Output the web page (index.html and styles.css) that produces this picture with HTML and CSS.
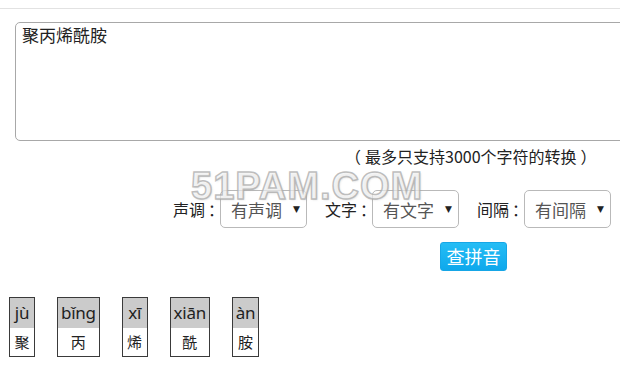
FILE: index.html
```html
<!DOCTYPE html>
<html lang="zh-CN">
<head>
<meta charset="utf-8">
<title>汉字转拼音</title>
<link rel="stylesheet" href="styles.css">
</head>
<body>
<div class="page">
  <div class="input-wrap">
    <textarea class="input">聚丙烯酰胺</textarea>
  </div>
  <div class="hint"><span class="po">（</span>最多只支持3000个字符的转换<span class="pc">）</span></div>
  <div class="options">
    <span class="label">声调<span class="colon">：</span></span>
    <span class="select"><span class="sel-text">有声调</span><span class="arrow">▼</span></span>
    <span class="label">文字<span class="colon">：</span></span>
    <span class="select"><span class="sel-text">有文字</span><span class="arrow">▼</span></span>
    <span class="label">间隔<span class="colon">：</span></span>
    <span class="select"><span class="sel-text">有间隔</span><span class="arrow">▼</span></span>
  </div>
  <div class="actions">
    <button class="btn">查拼音</button>
  </div>
  <div class="result">
    <div class="cell"><div class="py">jù</div><div class="hz">聚</div></div>
    <div class="cell"><div class="py">bǐng</div><div class="hz">丙</div></div>
    <div class="cell"><div class="py">xī</div><div class="hz">烯</div></div>
    <div class="cell"><div class="py">xiān</div><div class="hz">酰</div></div>
    <div class="cell"><div class="py">àn</div><div class="hz">胺</div></div>
  </div>
  <div class="watermark">51PAM.COM</div>
</div>
</body>
</html>
```

FILE: styles.css
```css
html, body {
  margin: 0;
  padding: 0;
  background: #fff;
  overflow: hidden;
}
body {
  font-family: "Noto Sans CJK SC", "Noto Sans", sans-serif;
  color: #333;
}
.page {
  position: relative;
  margin-top: 8px;
  border-top: 1px solid #e2e2e2;
  height: 375px;
  overflow: hidden;
}
.input-wrap {
  padding-left: 15px;
  padding-top: 13px;
  width: 660px;
}
.input {
  display: block;
  box-sizing: border-box;
  width: 640px;
  height: 119px;
  border: 1px solid #a8a8a8;
  border-radius: 5px;
  padding: 0 6px;
  margin: 0;
  font-family: "Noto Sans CJK SC", sans-serif;
  font-size: 17px;
  line-height: 24px;
  color: #222;
  resize: none;
  outline: none;
}
.hint {
  margin-top: 5px;
  padding-left: 345px;
  font-size: 16px;
  line-height: 20px;
  color: #222;
  white-space: nowrap;
}
.po {
  margin-right: 4px;
}
.pc {
  margin-left: 4px;
}
.options {
  display: flex;
  align-items: center;
  margin-top: 24px;
  padding-left: 173px;
  height: 38px;
}
.label {
  font-size: 16px;
  color: #222;
  width: 47px;
  margin-left: 18px;
  white-space: nowrap;
}
.label:first-child {
  margin-left: 0;
}
.colon {
  padding-left: 3px;
  letter-spacing: -9px;
}
.select {
  box-sizing: border-box;
  display: flex;
  align-items: center;
  justify-content: space-between;
  width: 87px;
  height: 38px;
  border: 1px solid #b9b9b9;
  border-radius: 5px;
  padding: 0 6px 0 10px;
  background: #fff;
}
.sel-text {
  font-size: 17px;
  color: #555;
}
.arrow {
  font-family: "DejaVu Sans", sans-serif;
  font-size: 9px;
  color: #222;
}
.actions {
  margin-top: 14px;
  padding-left: 440px;
}
.btn {
  box-sizing: border-box;
  width: 67px;
  height: 29px;
  padding: 0;
  border: 1px solid #16a6e6;
  border-radius: 3px;
  background: linear-gradient(#25bdf5, #0ea8ec);
  color: #fff;
  font-family: "Noto Sans CJK SC", sans-serif;
  font-size: 18px;
  line-height: 27px;
}
.result {
  display: flex;
  align-items: flex-start;
  gap: 22px;
  margin-top: 26px;
  padding-left: 9px;
}
.cell {
  border: 1px solid #3a3a3a;
  min-width: 24px;
  text-align: center;
}
.py {
  background: #cbcbcb;
  height: 30px;
  line-height: 30px;
  padding: 0 3px;
  font-family: "Noto Sans", sans-serif;
  font-size: 17px;
  letter-spacing: -0.3px;
  color: #222;
}
.hz {
  height: 28px;
  line-height: 28px;
  font-size: 15px;
  color: #222;
}
.watermark {
  position: absolute;
  left: 191px;
  top: 156px;
  font-family: "Liberation Sans", sans-serif;
  font-weight: bold;
  font-size: 38px;
  letter-spacing: 1px;
  color: rgba(255, 255, 255, 0.6);
  -webkit-text-stroke: 1.5px rgba(170, 170, 170, 0.75);
  text-shadow: 1px 1px 2px rgba(150, 150, 150, 0.35);
  pointer-events: none;
}
```
